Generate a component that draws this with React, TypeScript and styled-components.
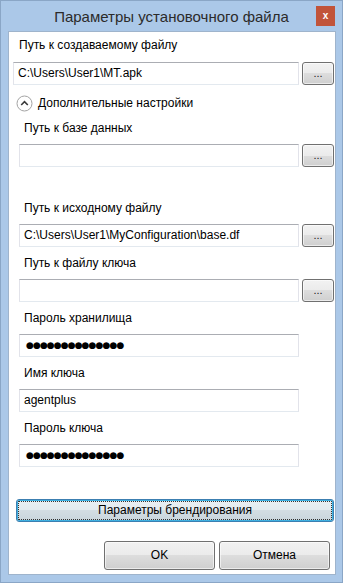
import React from "react";
import styled, { createGlobalStyle } from "styled-components";

const Global = createGlobalStyle`
  html, body { margin: 0; padding: 0; background: #abc7e6; }
  body { font-family: "Liberation Sans", Arial, sans-serif; }
  * { box-sizing: border-box; }
`;

const Window = styled.div`
  width: 343px;
  height: 583px;
  background: #abc8e8;
  border: 1px solid #8aa6c6;
  display: flex;
  flex-direction: column;
`;

const TitleBar = styled.div`
  height: 30px;
  display: grid;
  grid-template-columns: 1fr auto 1fr;
  align-items: start;
`;

const Title = styled.div`
  grid-column: 2;
  font-size: 15px;
  line-height: 18px;
  margin-top: 7px;
  color: #2b2b2b;
  white-space: nowrap;
`;

const CloseBtn = styled.div`
  grid-column: 3;
  justify-self: end;
  margin-top: 5px;
  margin-right: 7px;
  width: 19px;
  height: 20px;
  background: #c1543a;
  color: #fff;
  font-weight: bold;
  font-size: 10px;
  line-height: 19px;
  text-align: center;
`;

const Client = styled.div`
  flex: 1;
  margin: 0 6px 7px 7px;
  background: #fff;
  border: 1px solid #9fb4cc;
  display: flex;
  flex-direction: column;
  padding: 0 0 0 4px;
`;

const Label = styled.div<{ $left?: number; $top?: number }>`
  font-size: 12px;
  line-height: 16px;
  height: 16px;
  color: #000;
  margin-left: ${(p) => p.$left ?? 5}px;
  margin-top: ${(p) => p.$top ?? 8}px;
`;

const Row = styled.div<{ $top?: number }>`
  display: flex;
  gap: 3px;
  margin-top: ${(p) => p.$top ?? 8}px;
  height: 23px;
`;

const Field = styled.div<{ $width?: number }>`
  ${(p) => (p.$width ? `width: ${p.$width}px;` : "flex: 1;")}
  height: 23px;
  border: 1px solid #e2e3ea;
  border-top-color: #abadb3;
  border-bottom-color: #e3e9ef;
  font-size: 12px;
  line-height: 21px;
  padding-left: 4px;
  color: #000;
  white-space: nowrap;
  overflow: hidden;
`;

const Dots = styled(Field)`
  font-family: "DejaVu Sans", sans-serif;
  font-size: 9px;
  letter-spacing: -0.9px;
  padding-left: 6px;
`;

const Browse = styled.div`
  width: 32px;
  height: 23px;
  border: 1px solid #707070;
  border-radius: 3px;
  background: linear-gradient(#f2f2f2 0%, #ebebeb 50%, #dddddd 50%, #cfcfcf 100%);
  box-shadow: inset 0 0 0 1px rgba(255, 255, 255, 0.6);
  font-size: 11px;
  line-height: 20px;
  text-align: center;
  color: #1a1a1a;
  margin-right: 1px;
`;

const Section = styled.div`
  display: flex;
  flex-direction: column;
  padding-left: 6px;
`;

const Expander = styled.div`
  display: flex;
  align-items: center;
  gap: 5px;
  height: 18px;
  margin-top: 9px;
  margin-left: 2px;
  font-size: 12px;
  color: #000;
`;

const Spacer = styled.div<{ $h: number }>`
  height: ${(p) => p.$h}px;
  flex-shrink: 0;
`;

const Branding = styled.div`
  margin-top: 32px;
  margin-left: 3px;
  margin-right: 1px;
  height: 23px;
  border: 1px solid #3c7fb1;
  border-radius: 3px;
  box-shadow: inset 0 0 0 1px #3fb0e0;
  background: linear-gradient(#eaf0f3 0%, #e3eaee 50%, #d3dde3 50%, #c9d5dc 100%);
  outline: 1px dotted #333;
  outline-offset: -3px;
  font-size: 12px;
  line-height: 21px;
  text-align: center;
  color: #000;
`;

const Footer = styled.div`
  display: flex;
  justify-content: flex-end;
  gap: 4px;
  margin-top: 19px;
  margin-right: 5px;
`;

const DlgButton = styled.div`
  width: 111px;
  height: 29px;
  border: 1px solid #707070;
  border-radius: 3px;
  background: linear-gradient(#f2f2f2 0%, #ebebeb 50%, #dddddd 50%, #cfcfcf 100%);
  box-shadow: inset 0 0 0 1px rgba(255, 255, 255, 0.6);
  font-size: 12px;
  line-height: 27px;
  text-align: center;
  color: #000;
`;

const ExpIcon = () => (
  <svg width="17" height="17" viewBox="0 0 17 17" style={{ marginLeft: 1 }}>
    <circle cx="8.5" cy="8.5" r="7.5" fill="#fff" stroke="#a3a3a3" strokeWidth="1" />
    <path d="M5.2 10 L8.5 6.7 L11.8 10" fill="none" stroke="#3a3a3a" strokeWidth="1.6" />
  </svg>
);

const dots = "●●●●●●●●●●●●●●";

export default function App() {
  return (
    <>
      <Global />
      <Window>
        <TitleBar>
          <Title>Параметры установочного файла</Title>
          <CloseBtn>x</CloseBtn>
        </TitleBar>
        <Client>
          <Label $top={5} $left={6}>Путь к создаваемому файлу</Label>
          <Row $top={9}>
            <Field>C:\Users\User1\MT.apk</Field>
            <Browse>...</Browse>
          </Row>
          <Expander>
            <ExpIcon />
            <span>Дополнительные настройки</span>
          </Expander>
          <Section>
            <Label>Путь к базе данных</Label>
            <Row>
              <Field />
              <Browse>...</Browse>
            </Row>
            <Spacer $h={25} />
            <Label>Путь к исходному файлу</Label>
            <Row>
              <Field>C:\Users\User1\MyConfiguration\base.df</Field>
              <Browse>...</Browse>
            </Row>
            <Label>Путь к файлу ключа</Label>
            <Row>
              <Field />
              <Browse>...</Browse>
            </Row>
            <Label>Пароль хранилища</Label>
            <Row>
              <Dots $width={280}>{dots}</Dots>
            </Row>
            <Label>Имя ключа</Label>
            <Row>
              <Field $width={280}>agentplus</Field>
            </Row>
            <Label>Пароль ключа</Label>
            <Row>
              <Dots $width={280}>{dots}</Dots>
            </Row>
          </Section>
          <Branding>Параметры брендирования</Branding>
          <Footer>
            <DlgButton>OK</DlgButton>
            <DlgButton>Отмена</DlgButton>
          </Footer>
        </Client>
      </Window>
    </>
  );
}
